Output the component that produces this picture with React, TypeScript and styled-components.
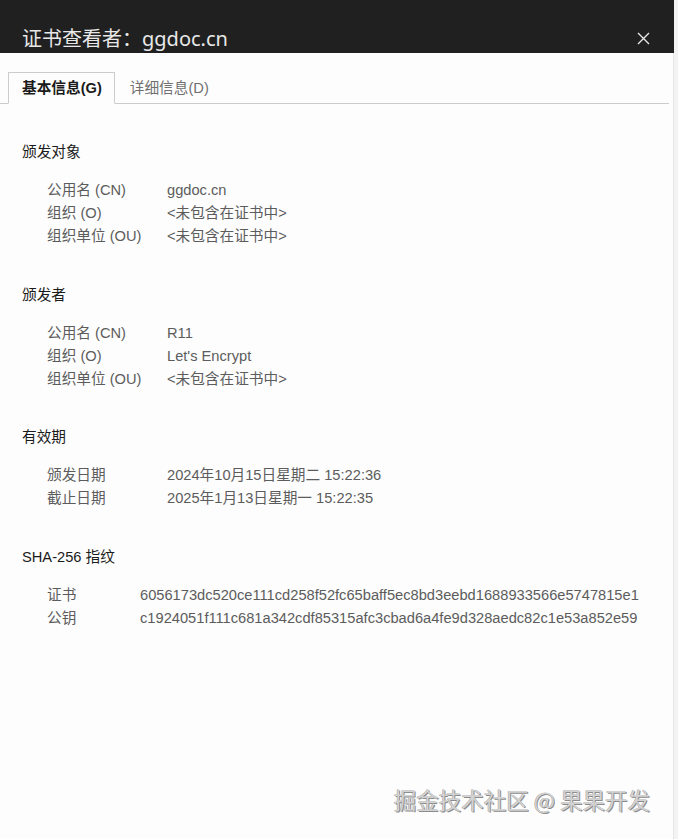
import React from "react";
import styled, { createGlobalStyle } from "styled-components";

const GlobalStyle = createGlobalStyle`
    html, body {
        margin: 0;
        padding: 0;
        background: #fdfdfd;
    }
    body {
        font-family: "Liberation Sans", "Noto Sans CJK SC", sans-serif;
        font-size: 14.67px;
    }
`;

interface Field {
    label: string;
    value: string;
}

interface Section {
    title: string;
    fields: Field[];
    valueOffset?: number;
}

const sections: Section[] = [
    {
        title: "颁发对象",
        fields: [
            { label: "公用名 (CN)", value: "ggdoc.cn" },
            { label: "组织 (O)", value: "<未包含在证书中>" },
            { label: "组织单位 (OU)", value: "<未包含在证书中>" },
        ],
    },
    {
        title: "颁发者",
        fields: [
            { label: "公用名 (CN)", value: "R11" },
            { label: "组织 (O)", value: "Let's Encrypt" },
            { label: "组织单位 (OU)", value: "<未包含在证书中>" },
        ],
    },
    {
        title: "有效期",
        fields: [
            { label: "颁发日期", value: "2024年10月15日星期二 15:22:36" },
            { label: "截止日期", value: "2025年1月13日星期一 15:22:35" },
        ],
    },
    {
        title: "SHA-256 指纹",
        valueOffset: 93,
        fields: [
            { label: "证书", value: "6056173dc520ce111cd258f52fc65baff5ec8bd3eebd1688933566e5747815e1" },
            { label: "公钥", value: "c1924051f111c681a342cdf85315afc3cbad6a4fe9d328aedc82c1e53a852e59" },
        ],
    },
];

const App = () => {
    return (
        <Window>
            <GlobalStyle />
            <TitleBar>
                <Title>证书查看者：ggdoc.cn</Title>
                <CloseButton aria-label="关闭">
                    <svg width="13" height="13" viewBox="0 0 13 13">
                        <path d="M1 1 L12 12 M12 1 L1 12" stroke="#e6e6e6" strokeWidth="1.4" fill="none" />
                    </svg>
                </CloseButton>
            </TitleBar>

            <Body>
                <TabBar>
                    <Tab active>基本信息(G)</Tab>
                    <Tab>详细信息(D)</Tab>
                </TabBar>

                <Content>
                    {sections.map(section => (
                        <Group key={section.title}>
                            <GroupTitle>{section.title}</GroupTitle>
                            {section.fields.map(field => (
                                <Row key={field.label} offset={section.valueOffset ?? 120}>
                                    <Label>{field.label}</Label>
                                    <Value>{field.value}</Value>
                                </Row>
                            ))}
                        </Group>
                    ))}
                </Content>

                <Watermark>掘金技术社区 @ 果果开发</Watermark>
            </Body>
        </Window>
    );
};

export default App;

const Window = styled.div`
    display: flex;
    flex-direction: column;
    width: 100%;
    min-height: 100vh;
    box-sizing: border-box;
    border-right: 4px solid #f3f3f3;
`;

const TitleBar = styled.div`
    height: 53px;
    background-color: #202020;
    display: flex;
    align-items: flex-end;
    justify-content: space-between;
    padding: 0 24px 0 22px;
    box-sizing: border-box;
`;

const Title = styled.div`
    font-family: "Noto Sans", "Noto Sans CJK SC", sans-serif;
    font-size: 20px;
    line-height: 28px;
    color: #e8e8e8;
`;

const CloseButton = styled.a`
    cursor: pointer;
    display: flex;
    align-items: center;
    justify-content: center;
    height: 26px;
    margin-bottom: 2px;
`;

const Body = styled.div`
    position: relative;
    flex: 1;
    background-color: #fdfdfd;
    border-right: 1px solid #e6e6e6;
`;

const TabBar = styled.div`
    display: flex;
    align-items: flex-end;
    padding: 19px 0 0 8px;
    margin-right: 4px;
    border-bottom: 1px solid #cccccc;
`;

const Tab = styled.div<{ active?: boolean }>`
    height: 30px;
    line-height: 30px;
    padding: ${p => (p.active ? "0 12px 0 13px" : "0 14px")};
    margin-bottom: -1px;
    font-size: 14.67px;
    font-weight: ${p => (p.active ? 700 : 400)};
    color: ${p => (p.active ? "#1a1a1a" : "#707070")};
    background-color: ${p => (p.active ? "#fdfdfd" : "transparent")};
    border: 1px solid ${p => (p.active ? "#cccccc" : "transparent")};
    border-bottom: 1px solid ${p => (p.active ? "#fdfdfd" : "transparent")};
    cursor: pointer;
`;

const Content = styled.div`
    padding: 37px 22px 0 22px;
    display: flex;
    flex-direction: column;
    gap: 35.5px;
`;

const Group = styled.div`
    display: flex;
    flex-direction: column;
`;

const GroupTitle = styled.div`
    line-height: 23px;
    color: #1b1b1b;
    margin-bottom: 15px;
`;

const Row = styled.div<{ offset: number }>`
    display: grid;
    grid-template-columns: ${p => p.offset}px 1fr;
    padding-left: 25px;
    line-height: 23px;
    color: #5c5c5c;
`;

const Label = styled.span`
    white-space: nowrap;
`;

const Value = styled.span`
    white-space: nowrap;
`;

const Watermark = styled.div`
    position: absolute;
    right: 23px;
    bottom: 24px;
    font-family: "Noto Sans CJK SC", sans-serif;
    font-size: 22.5px;
    color: #d2d2d2;
    text-shadow: 1px 1px 0 #8c8c8c, -0.5px -0.5px 0 #a8a8a8;
`;
